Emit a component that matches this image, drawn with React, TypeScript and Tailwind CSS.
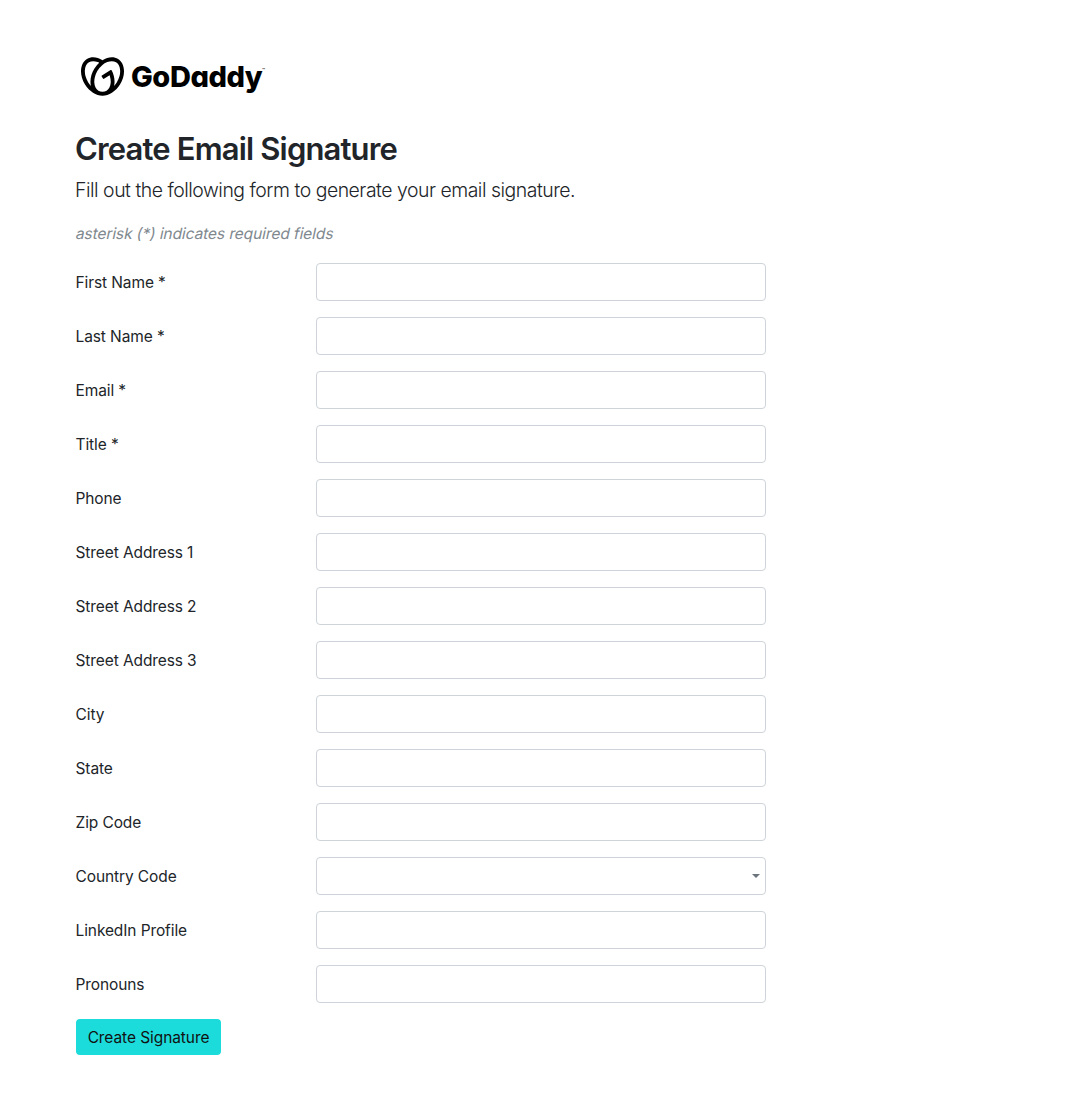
import { SiGodaddy } from 'react-icons/si';

type Field = { id: string; label: string; select?: boolean };

const fields: Field[] = [
  { id: 'first', label: 'First Name *' },
  { id: 'last', label: 'Last Name *' },
  { id: 'email', label: 'Email *' },
  { id: 'title', label: 'Title *' },
  { id: 'phone', label: 'Phone' },
  { id: 'street1', label: 'Street Address 1' },
  { id: 'street2', label: 'Street Address 2' },
  { id: 'street3', label: 'Street Address 3' },
  { id: 'city', label: 'City' },
  { id: 'state', label: 'State' },
  { id: 'zip', label: 'Zip Code' },
  { id: 'country', label: 'Country Code', select: true },
  { id: 'linkedin', label: 'LinkedIn Profile' },
  { id: 'pronouns', label: 'Pronouns' },
];

function Logo() {
  return (
    <div className="ml-[5px] flex h-[43px] items-center text-black">
      <SiGodaddy size={43} aria-hidden />
      <span className="ml-[7px] w-[131px] text-[29px] leading-[43px] font-extrabold tracking-[-0.45px] [font-feature-settings:'cv11']">
        GoDaddy
      </span>
      <span className="-mt-[13px] text-[5px] leading-none">™</span>
    </div>
  );
}

function FormRow({ id, label, select }: Field) {
  return (
    <div className="grid grid-cols-[240px_450px] items-center">
      <label htmlFor={id} className="ml-[-0.5px] pt-0.5 text-[15.5px] leading-6 tracking-[-0.1px]">
        {label}
      </label>
      {select ? (
        <div className="relative">
          <select
            id={id}
            className="block h-[38px] w-full appearance-none rounded border border-[#ced4da] bg-white px-3"
          />
          <svg
            className="pointer-events-none absolute top-[17px] right-1.5 h-1 w-2 text-[#6c757d]"
            viewBox="0 0 8 4"
            fill="currentColor"
            aria-hidden
          >
            <path d="M0 0h8L4 4z" />
          </svg>
        </div>
      ) : (
        <input id={id} className="block h-[38px] w-full rounded border border-[#ced4da] bg-white px-3" />
      )}
    </div>
  );
}

export default function App() {
  return (
    <main className="min-h-screen bg-white pt-[55px] pl-[76px] font-['Inter',sans-serif] text-[#212529]">
      <Logo />
      <h1 className="mt-8 -ml-px text-[31px] leading-[38px] font-semibold tracking-[-0.84px]">
        Create Email Signature
      </h1>
      <p className="mt-[7px] -ml-px text-[19.4px] leading-[30px] font-light tracking-[-0.465px]">
        Fill out the following form to generate your email signature.
      </p>
      <p className="mt-[17px] ml-[-0.5px] w-fit -skew-x-12 text-[15.5px] leading-6 tracking-[-0.09px] text-[#7f898f]">
        asterisk (*) indicates required fields
      </p>
      <form className="mt-[17px] flex flex-col items-start gap-4" onSubmit={(e) => e.preventDefault()}>
        {fields.map((field) => (
          <FormRow key={field.id} {...field} />
        ))}
        <button
          type="submit"
          className="h-9 w-[145px] rounded bg-[#1bdbdb] pt-0.5 text-[15.5px] leading-[34px] tracking-[-0.08px] text-[#111111]"
        >
          Create Signature
        </button>
      </form>
    </main>
  );
}
